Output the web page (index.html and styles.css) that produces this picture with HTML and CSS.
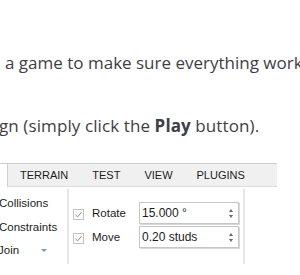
FILE: index.html
```html
<!DOCTYPE html>
<html>
<head>
<meta charset="utf-8">
<link rel="stylesheet" href="styles.css">
</head>
<body>
<div class="doc">
  <p class="line line1">a game to make sure everything works</p>
  <p class="line line2">gn (simply click the <b>Play</b> button).</p>
</div>
<div class="studio">
  <div class="tabs">
    <div class="tab active"></div>
    <div class="tab">TERRAIN</div>
    <div class="tab">TEST</div>
    <div class="tab">VIEW</div>
    <div class="tab">PLUGINS</div>
  </div>
  <div class="ribbon">
    <div class="sec sec-left">
      <div class="item">Collisions</div>
      <div class="item">Constraints</div>
      <div class="item item-join">Join <span class="drop"></span></div>
    </div>
    <div class="sec sec-snap">
      <div class="row">
        <span class="check"><svg width="9" height="9" viewBox="0 0 9 9"><path d="M1.5 4.8 L3.6 6.8 L7.6 2.2" fill="none" stroke="#8a8a8a" stroke-width="1"/></svg></span>
        <span class="label">Rotate</span>
        <span class="field"><span class="val">15.000 °</span><span class="spin"><i class="up"></i><i class="down"></i></span></span>
      </div>
      <div class="row">
        <span class="check"><svg width="9" height="9" viewBox="0 0 9 9"><path d="M1.5 4.8 L3.6 6.8 L7.6 2.2" fill="none" stroke="#8a8a8a" stroke-width="1"/></svg></span>
        <span class="label">Move</span>
        <span class="field"><span class="val">0.20 studs</span><span class="spin"><i class="up"></i><i class="down"></i></span></span>
      </div>
    </div>
  </div>
</div>
</body>
</html>
```

FILE: styles.css
```css
html, body {
  margin: 0;
  padding: 0;
  background: #ffffff;
  width: 300px;
  height: 275px;
  overflow: hidden;
}

.doc {
  font-family: "Open Sans", "Noto Sans", sans-serif;
  font-size: 17px;
  color: #3e4046;
  padding-top: 51px;
}

.line {
  margin: 0;
  line-height: 24px;
  white-space: nowrap;
  overflow: hidden;
}

.line1 {
  padding-left: 5px;
}

.line2 {
  margin-top: 39px;
  margin-left: -1px;
  letter-spacing: 0.1px;
}

.line2 b {
  font-weight: 700;
}

.studio {
  margin-top: 25px;
  font-family: "Liberation Sans", Arial, sans-serif;
  color: #1c1c1c;
}

.tabs {
  width: 277px;
  height: 22px;
  display: flex;
  align-items: center;
  background: #f0f0f0;
  border-top: 1px solid #cfcfcf;
  border-bottom: 1px solid #dcdcdc;
  font-size: 11px;
}

.tab {
  padding: 0 12px;
  line-height: 22px;
}

.tab.active {
  width: 7px;
  padding: 0;
  height: 23px;
  align-self: flex-start;
  background: #ffffff;
  border-right: 1px solid #cfcfcf;
}

.ribbon {
  display: flex;
  height: 88px;
  font-size: 11.5px;
}

.sec {
  border-right: 2px solid #e6e6e6;
  margin: 2px 0 11px;
}

.sec-left {
  width: 67px;
  padding-top: 3px;
  overflow: hidden;
}

.item {
  line-height: 23.5px;
  margin-left: -1px;
  white-space: nowrap;
}

.item-join {
  margin-left: -2px;
  display: flex;
  align-items: center;
}

.drop {
  width: 0;
  height: 0;
  margin-left: 22px;
  border-left: 3px solid transparent;
  border-right: 3px solid transparent;
  border-top: 3px solid #6b97d8;
}

.sec-snap {
  width: 170px;
  padding: 13px 0 0 4px;
  display: flex;
  flex-direction: column;
  gap: 2px;
}

.row {
  display: flex;
  align-items: center;
  height: 22px;
}

.check {
  width: 11px;
  height: 11px;
  box-sizing: border-box;
  border: 1px solid #c4c4c4;
  background: #fbfbfb;
  display: flex;
  align-items: center;
  justify-content: center;
  margin-right: 8px;
  margin-top: 2px;
}

.label {
  width: 47px;
}

.field {
  width: 100px;
  height: 22px;
  box-sizing: border-box;
  border: 1px solid #c6c6c6;
  box-shadow: 1px 1px 0 #d8d8d8;
  display: flex;
  align-items: center;
  justify-content: space-between;
  padding: 0 5px 0 2px;
  background: #ffffff;
  font-size: 12px;
}

.spin {
  display: flex;
  flex-direction: column;
  gap: 3px;
}

.spin i {
  display: block;
  width: 0;
  height: 0;
  border-left: 2.5px solid transparent;
  border-right: 2.5px solid transparent;
}

.spin .up {
  border-bottom: 3px solid #666;
}

.spin .down {
  border-top: 3px solid #666;
}
```
